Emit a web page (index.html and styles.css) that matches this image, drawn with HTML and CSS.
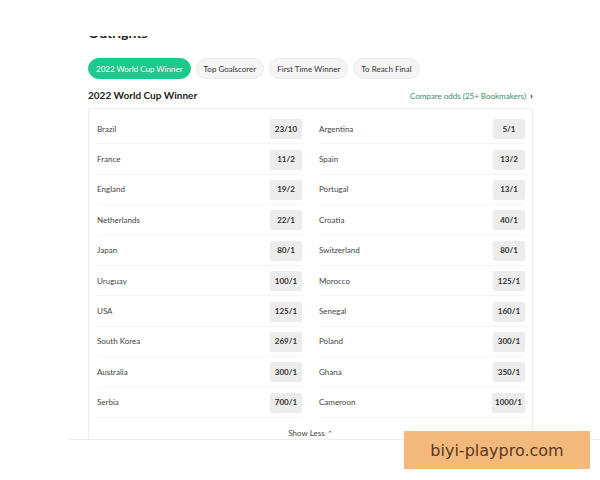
FILE: index.html
```html
<!DOCTYPE html>
<html>
<head>
<meta charset="utf-8">
<link rel="stylesheet" href="styles.css">
</head>
<body>
<div class="topbar"></div>
<div class="page">
  <h2 class="title">Outrights</h2>
  <div class="tabs">
    <span class="tab active">2022 World Cup Winner</span>
    <span class="tab">Top Goalscorer</span>
    <span class="tab">First Time Winner</span>
    <span class="tab">To Reach Final</span>
  </div>
  <div class="subhead">
    <span class="subtitle">2022 World Cup Winner</span>
    <span class="compare">Compare odds (25+ Bookmakers) <b class="chev">›</b></span>
  </div>
  <div class="card">
    <div class="grid">
      <div class="row"><span class="name">Brazil</span><span class="odds">23/10</span></div>
      <div class="row"><span class="name">Argentina</span><span class="odds">5/1</span></div>
      <div class="row"><span class="name">France</span><span class="odds">11/2</span></div>
      <div class="row"><span class="name">Spain</span><span class="odds">13/2</span></div>
      <div class="row"><span class="name">England</span><span class="odds">19/2</span></div>
      <div class="row"><span class="name">Portugal</span><span class="odds">13/1</span></div>
      <div class="row"><span class="name">Netherlands</span><span class="odds">22/1</span></div>
      <div class="row"><span class="name">Croatia</span><span class="odds">40/1</span></div>
      <div class="row"><span class="name">Japan</span><span class="odds">80/1</span></div>
      <div class="row"><span class="name">Switzerland</span><span class="odds">80/1</span></div>
      <div class="row"><span class="name">Uruguay</span><span class="odds">100/1</span></div>
      <div class="row"><span class="name">Morocco</span><span class="odds">125/1</span></div>
      <div class="row"><span class="name">USA</span><span class="odds">125/1</span></div>
      <div class="row"><span class="name">Senegal</span><span class="odds">160/1</span></div>
      <div class="row"><span class="name">South Korea</span><span class="odds">269/1</span></div>
      <div class="row"><span class="name">Poland</span><span class="odds">300/1</span></div>
      <div class="row"><span class="name">Australia</span><span class="odds">300/1</span></div>
      <div class="row"><span class="name">Ghana</span><span class="odds">350/1</span></div>
      <div class="row"><span class="name">Serbia</span><span class="odds">700/1</span></div>
      <div class="row"><span class="name">Cameroon</span><span class="odds">1000/1</span></div>
    </div>
    <div class="more">Show Less <span class="caret">&#8963;</span></div>
  </div>
</div>
<div class="footer"></div>
<div class="watermark">biyi-playpro.com</div>
</body>
</html>
```
FILE: styles.css
```css
html, body {
  margin: 0;
  padding: 0;
  background: #fff;
  height: 480px;
  overflow: hidden;
}
body {
  font-family: Lato, "Noto Sans", sans-serif;
  color: #333;
  position: relative;
}
.topbar {
  position: absolute;
  left: 0;
  top: 0;
  width: 600px;
  height: 36px;
  background: #fff;
  z-index: 2;
}
.page {
  margin-left: 88px;
  width: 445px;
  height: 439px;
  overflow: hidden;
}
.title {
  margin: 23px 0 0 0;
  font-size: 14px;
  font-weight: 700;
  color: #222;
  line-height: 20px;
  height: 20px;
}
.tabs {
  display: flex;
  gap: 5px;
  margin-top: 15px;
}
.tab {
  display: inline-flex;
  align-items: center;
  height: 21px;
  padding: 0 7px;
  border-radius: 11px;
  background: #f5f5f5;
  border: 1px solid #ececec;
  box-sizing: border-box;
  font-size: 8px;
  color: #333;
  white-space: nowrap;
}
.tab.active {
  background: #1fc98e;
  border-color: #1fc98e;
  color: #fff;
}
.subhead {
  display: flex;
  justify-content: space-between;
  align-items: center;
  margin-top: 7px;
  height: 18px;
}
.subtitle {
  font-size: 10px;
  font-weight: 700;
  color: #222;
}
.compare {
  font-size: 8px;
  color: #3b8c70;
}
.chev {
  color: #333;
  font-size: 10px;
  margin-left: 2px;
}
.card {
  margin-top: 4px;
  border: 1px solid #ececec;
  border-radius: 3px;
  padding: 5px 8px 0 8px;
}
.grid {
  display: grid;
  grid-template-columns: 205px 206px;
  column-gap: 17px;
}
.row {
  display: flex;
  justify-content: space-between;
  align-items: center;
  height: 30.4px;
  border-bottom: 1px solid #f4f4f4;
  box-sizing: border-box;
}
.name {
  font-size: 8px;
  color: #444;
}
.odds {
  display: inline-flex;
  align-items: center;
  justify-content: center;
  min-width: 32px;
  height: 19px;
  padding: 0 3px;
  box-sizing: border-box;
  background: #ececec;
  border-radius: 2px;
  box-shadow: 0 1px 1px rgba(0,0,0,0.08);
  font-size: 8px;
  font-weight: 700;
  color: #333;
}
.more {
  text-align: center;
  font-size: 8px;
  color: #444;
  padding-top: 10px;
  height: 30px;
}
.caret {
  font-size: 7px;
}
.footer {
  position: absolute;
  left: 68px;
  right: 0;
  top: 439px;
  height: 41px;
  border-top: 1px solid #ececec;
  background: #fff;
}
.watermark {
  position: absolute;
  left: 404px;
  top: 431px;
  width: 186px;
  height: 38px;
  background: #f2b87c;
  color: #5a3a1e;
  font-family: "DejaVu Sans", sans-serif;
  font-size: 16px;
  display: flex;
  align-items: center;
  justify-content: center;
}
```
